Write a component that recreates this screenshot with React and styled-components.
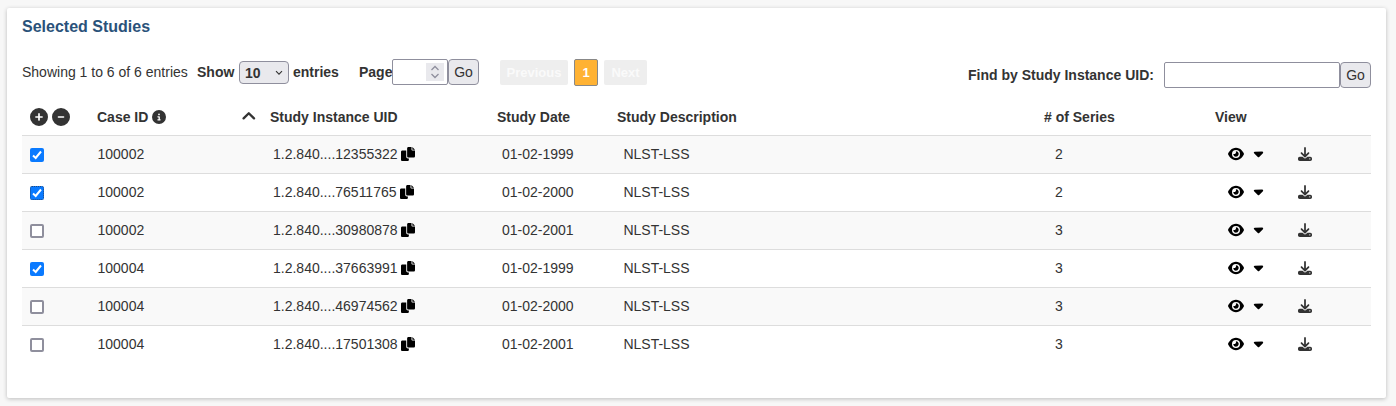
import React from 'react';
import styled, { createGlobalStyle } from 'styled-components';
import { FaCirclePlus, FaCircleMinus, FaCircleInfo, FaEye, FaCaretDown, FaDownload } from 'react-icons/fa6';

const GlobalStyle = createGlobalStyle`
  *, *::before, *::after { box-sizing: border-box; }
  body {
    margin: 0;
    background: #f7f7f7;
    color: #333;
    font: 14px/20px "Liberation Sans", Arial, sans-serif;
  }
  svg { display: block; flex: none; }
`;

const Page = styled.main`
  height: 406px;
  padding: 8px 10px 8px 7px;
  overflow: hidden;
`;

const Card = styled.section`
  height: 390px;
  padding: 0 15px;
  background: #fff;
  border-radius: 2px;
  box-shadow: 0 1px 4px rgba(0, 0, 0, 0.24);
`;

const Title = styled.h2`
  margin: 0;
  padding-top: 8px;
  height: 51px;
  font-size: 16px;
  line-height: 21px;
  color: #2a527a;
`;

const Toolbar = styled.div`
  display: flex;
  align-items: flex-start;
  height: 39px;
`;

const Summary = styled.span`
  width: 175px;
  line-height: 26px;
  white-space: nowrap;
`;

const Label = styled.label`
  font-weight: bold;
  line-height: 26px;
  white-space: nowrap;
  ${(p) => p.$width && `width: ${p.$width}px;`}
`;

const Select = styled.button`
  display: flex;
  align-items: center;
  justify-content: space-between;
  width: 50px;
  height: 23px;
  margin: 2px 4px 0 0;
  padding: 0 5px;
  font: bold 14px "Liberation Sans", Arial, sans-serif;
  color: #333;
  background: #e9e9ed;
  border: 1px solid #8f8f9d;
  border-radius: 4px;
`;

const NumberBox = styled.div`
  display: flex;
  justify-content: flex-end;
  width: 56px;
  height: 26px;
  padding: 3px;
  border: 1px solid #8f8f9d;
  border-radius: 2px;
`;

const Spinner = styled.span`
  display: flex;
  align-items: center;
  justify-content: center;
  width: 18px;
  height: 18px;
  background: #e9e9ed;
`;

const GoButton = styled.button`
  width: 31px;
  height: 26px;
  padding: 0;
  font: 14px "Liberation Sans", Arial, sans-serif;
  color: #333;
  background: #e9e9ed;
  border: 1px solid #8f8f9d;
  border-radius: 4px;
`;

const Pager = styled.nav`
  display: flex;
  align-items: center;
  gap: 6px;
  height: 27px;
  margin-left: 21px;
`;

const PageButton = styled.button`
  width: ${(p) => p.$width}px;
  height: ${(p) => (p.$current ? 27 : 25)}px;
  padding: 0;
  font: bold 13px "Liberation Sans", Arial, sans-serif;
  color: ${(p) => (p.$current ? '#fff' : '#fafafa')};
  background: ${(p) => (p.$current ? '#ffb233' : '#eee')};
  border: ${(p) => (p.$current ? '1px solid #888' : '0')};
  border-radius: 2px;
`;

const Search = styled.div`
  display: flex;
  margin: 3px 0 0 auto;
`;

const SearchInput = styled.input`
  width: 176px;
  height: 26px;
  border: 1px solid #8f8f9d;
  border-radius: 2px;
  background: #fff;
`;

const Row = styled.div`
  display: grid;
  grid-template-columns: 75px 173px 227px 120px 427px 171px 83px 1fr;
  align-items: center;
  height: 38px;
  padding-bottom: 2px;
  border-top: 1px solid #ddd;
  background: ${(p) => (p.$striped ? '#f9f9f9' : '#fff')};
`;

const HeaderRow = styled(Row)`
  height: 37px;
  padding-bottom: 0;
  border-top: 0;
  font-weight: bold;
`;

const Cell = styled.div`
  display: flex;
  align-items: center;
  gap: ${(p) => p.$gap || 0}px;
  padding-left: ${(p) => p.$indent || 0}px;
  white-space: nowrap;
`;

const SortIcon = styled.svg`
  margin: 0 14px 2px auto;
`;

const Checkbox = styled.span`
  display: flex;
  width: 14px;
  height: 14px;
  margin-top: 2px;
  border-radius: 2px;
  background: ${(p) => (p.$checked ? '#0a7aff' : '#fff')};
  border: ${(p) => (p.$focused ? '1px dotted #204a80' : p.$checked ? '0' : '2px solid #8f8f9d')};
  align-items: center;
  justify-content: center;
`;

const BlackIcon = styled.span`
  color: #000;
`;

function CopyIcon() {
  return (
    <svg width="14" height="14" viewBox="0 0 512 512" fill="currentColor">
      <path d="M384 96V0H272c-26.5 0-48 21.5-48 48v288c0 26.5 21.5 48 48 48h192c26.5 0 48-21.5 48-48V128h-95.1C398.4 128 384 113.6 384 96zM416 0v96h96L416 0zM192 352V128H48c-26.5 0-48 21.5-48 48v288c0 26.5 21.5 48 48 48h192c26.5 0 48-21.5 48-48v-48h-32C220.7 416 192 387.3 192 352z" />
    </svg>
  );
}

const studies = [
  { caseId: '100002', uid: '1.2.840....12355322', date: '01-02-1999', series: 2, checked: true },
  { caseId: '100002', uid: '1.2.840....76511765', date: '01-02-2000', series: 2, checked: true, focused: true },
  { caseId: '100002', uid: '1.2.840....30980878', date: '01-02-2001', series: 3 },
  { caseId: '100004', uid: '1.2.840....37663991', date: '01-02-1999', series: 3, checked: true },
  { caseId: '100004', uid: '1.2.840....46974562', date: '01-02-2000', series: 3 },
  { caseId: '100004', uid: '1.2.840....17501308', date: '01-02-2001', series: 3 },
];

function StudyRow({ study, striped }) {
  return (
    <Row $striped={striped}>
      <Cell $indent={8}>
        <Checkbox $checked={study.checked} $focused={study.focused}>
          {study.checked && (
            <svg width="12" height="12" viewBox="0 0 12 12" fill="none" stroke="#fff" strokeWidth="2">
              <path d="M2 6.5 4.7 9 10 2.5" />
            </svg>
          )}
        </Checkbox>
      </Cell>
      <Cell $indent={0.5}>{study.caseId}</Cell>
      <Cell $indent={3} $gap={3.5}>
        {study.uid}
        <BlackIcon><CopyIcon /></BlackIcon>
      </Cell>
      <Cell $indent={5}>{study.date}</Cell>
      <Cell $indent={6.4}>NLST-LSS</Cell>
      <Cell $indent={11}>{study.series}</Cell>
      <Cell $indent={13} $gap={6.5}>
        <BlackIcon><FaEye size={16} /></BlackIcon>
        <BlackIcon><FaCaretDown size={15} /></BlackIcon>
      </Cell>
      <Cell><FaDownload size={14} /></Cell>
    </Row>
  );
}

export default function App() {
  return (
    <>
      <GlobalStyle />
      <Page>
        <Card>
          <Title>Selected Studies</Title>
          <Toolbar>
            <Summary>Showing 1 to 6 of 6 entries</Summary>
            <Label $width={42}>Show</Label>
            <Select>
              10
              <svg width="8" height="6" viewBox="0 0 8 6" fill="none" stroke="#333" strokeWidth="1.1">
                <path d="M1 1.2 4 4.2 7 1.2" />
              </svg>
            </Select>
            <Label $width={66}>entries</Label>
            <Label $width={33}>Page</Label>
            <NumberBox>
              <Spinner>
                <svg width="10" height="14" viewBox="0 0 10 14" fill="none" stroke="#8f8f9d" strokeWidth="1.3">
                  <path d="M1.5 5 5 1.5 8.5 5M1.5 9 5 12.5 8.5 9" />
                </svg>
              </Spinner>
            </NumberBox>
            <GoButton>Go</GoButton>
            <Pager>
              <PageButton $width={68}>Previous</PageButton>
              <PageButton $width={24} $current>1</PageButton>
              <PageButton $width={43}>Next</PageButton>
            </Pager>
            <Search>
              <Label $width={196}>Find by Study Instance UID:</Label>
              <SearchInput />
              <GoButton>Go</GoButton>
            </Search>
          </Toolbar>
          <HeaderRow>
            <Cell $indent={7.5} $gap={4}>
              <FaCirclePlus size={18} />
              <FaCircleMinus size={18} />
            </Cell>
            <Cell $gap={4}>
              Case ID
              <FaCircleInfo size={14} />
              <SortIcon width="14" height="9" viewBox="0 0 14 9" fill="none" stroke="#333" strokeWidth="2.3" strokeLinecap="round" strokeLinejoin="round">
                <path d="M1.6 7.4 6.8 2.2 12 7.4" />
              </SortIcon>
            </Cell>
            <Cell>Study Instance UID</Cell>
            <Cell>Study Date</Cell>
            <Cell>Study Description</Cell>
            <Cell># of Series</Cell>
            <Cell>View</Cell>
          </HeaderRow>
          {studies.map((study, i) => (
            <StudyRow key={study.uid} study={study} striped={i % 2 === 0} />
          ))}
        </Card>
      </Page>
    </>
  );
}
